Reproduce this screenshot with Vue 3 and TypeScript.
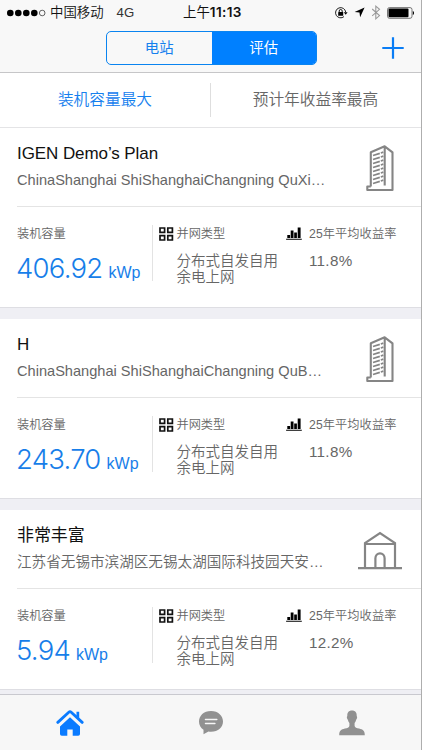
<script setup lang="ts">
import { ref } from 'vue'

interface Station {
  name: string
  address: string
  icon: 'tower' | 'house'
  capacity: string
  rate: string
}

const stations: Station[] = [
  { name: 'IGEN Demo’s Plan', address: 'ChinaShanghai ShiShanghaiChangning QuXi…', icon: 'tower', capacity: '406.92', rate: '11.8%' },
  { name: 'H', address: 'ChinaShanghai ShiShanghaiChangning QuB…', icon: 'tower', capacity: '243.70', rate: '11.8%' },
  { name: '非常丰富', address: '江苏省无锡市滨湖区无锡太湖国际科技园天安…', icon: 'house', capacity: '5.94', rate: '12.2%' },
]
const segments = ['电站', '评估']
const segment = ref(1)
const sorts = ['装机容量最大', '预计年收益率最高']
const sort = ref(0)
</script>

<template>
  <div class="screen">
    <header>
      <div class="status">
        <div class="carrier">
          <svg width="40" height="10" viewBox="0 0 40 10">
            <circle v-for="i in 4" :key="i" :cx="3.3 + (i - 1) * 8" cy="5" r="3.3" />
            <circle cx="35.2" cy="5" r="2.8" fill="none" stroke="#222" stroke-width=".7" />
          </svg>
          <span class="operator">中国移动</span>
          <span class="network">4G</span>
        </div>
        <div class="clock">上午<b>11:13</b></div>
        <div class="indicators">
          <svg width="14" height="14" viewBox="0 0 14 14">
            <path d="M11.7 6A5.1 5.1 0 1 0 10 10.6" fill="none" stroke="#222" stroke-width="1" />
            <path d="M9.8 6.3h3.8l-1.9 2.5z" />
            <rect x="4.2" y="6" width="5" height="3.8" rx=".4" />
            <path d="M5.2 6.2V5a1.5 1.5 0 0 1 3 0v1.2" fill="none" stroke="#000" stroke-width=".9" />
          </svg>
          <svg class="locate" width="11" height="11" viewBox="0 0 11 11"><path d="M10.6.4 6.1 10.2 5.5 5.6.6 5z" /></svg>
          <svg class="bluetooth" width="10" height="15" viewBox="0 0 10 15"><path d="m1.2 4 7.3 6.6-3.7 3.2V1.2l3.7 3.1-7.3 6.6" fill="none" stroke="#999" stroke-width="1.1" /></svg>
          <svg class="battery" width="28" height="12" viewBox="0 0 28 12">
            <rect x=".5" y=".6" width="24.5" height="10.7" rx="2" fill="none" stroke="#555" stroke-width=".8" />
            <rect x="1.5" y="1.6" width="20" height="8.7" rx="1" />
            <path d="M25.8 4c1.6.3 1.6 3.7 0 4z" />
          </svg>
        </div>
      </div>
      <div class="bar">
        <span></span>
        <div class="segmented">
          <button v-for="(label, i) in segments" :key="label" :class="{ on: segment === i }" @click="segment = i">{{ label }}</button>
        </div>
        <button class="add" aria-label="添加">
          <svg width="22" height="22" viewBox="0 0 22 22"><path d="M11 .3v21.4M.3 11h21.4" stroke="#0a7df5" stroke-width="2.2" /></svg>
        </button>
      </div>
    </header>

    <nav class="sorts">
      <button v-for="(label, i) in sorts" :key="label" :class="{ on: sort === i }" @click="sort = i">{{ label }}</button>
    </nav>

    <main>
      <article v-for="s in stations" :key="s.name">
        <div class="head">
          <div class="title">
            <h2>{{ s.name }}</h2>
            <p>{{ s.address }}</p>
          </div>
          <div class="icon">
            <svg v-if="s.icon === 'tower'" width="28" height="47" viewBox="0 0 28 47" fill="none" stroke="#858585">
              <path d="M4.8 41.5V7.2L18.7 1.3 26.500 7.400V45H1.300v-3.500h3.500M18.700 1.300v39.200" stroke-width="2.1" stroke-linejoin="round" />
              <path v-for="i in 8" :key="i" :d="`M7 ${6.5 + i * 4}l6.8-2.1M14.8 ${4 + i * 4}l2.5-.8`" stroke-width="1.8" />
            </svg>
            <svg v-else width="44" height="39" viewBox="0 0 44 39" fill="none" stroke="#858585" stroke-width="2.2">
              <path d="M0 37.2h44M7 37V12.2L22 2l15 10.2V37M7 13h30M17.4 37V27.3a4.6 5 0 0 1 9.2 0V37" />
            </svg>
          </div>
        </div>
        <div class="metrics">
          <section class="capacity">
            <h3>装机容量</h3>
            <div class="amount"><strong>{{ s.capacity }}</strong><span>kWp</span></div>
          </section>
          <section class="grid-type">
            <svg width="15" height="14" viewBox="0 0 15 14" fill="none" stroke="#111" stroke-width="1.7">
              <path d="M1 1h4.600v4.400H1zM8.800 1h4.600v4.400H8.800zM1 8.600h4.600V13H1zM8.800 8.600h4.600V13H8.800z" />
            </svg>
            <div>
              <h3>并网类型</h3>
              <p>分布式自发自用<br>余电上网</p>
            </div>
          </section>
          <section class="yield">
            <svg width="16" height="13" viewBox="0 0 16 13"><path d="M.1 11.700h15.700v1H.1zM1.300 8h2.800v3H1.300zM4.700 3.500h2.800V11H4.700zM8.200 5.500h2.700V11H8.200zM11.700.500h2.900V11h-2.900z" /></svg>
            <div>
              <h3>25年平均收益率</h3>
              <p>{{ s.rate }}</p>
            </div>
          </section>
        </div>
      </article>
    </main>

    <footer>
      <button aria-label="首页">
        <svg width="28" height="27" viewBox="0 0 28 27">
          <path d="M1.8 13.4 12.8 3.2q1.2-1.1 2.4 0l11 10.2" fill="none" stroke="#0a7bff" stroke-width="2.8" stroke-linecap="round" />
          <path d="M20.5 2.7h2.7v6.7l-2.7-2.5zM14 8.2 24 17.4V25q0 1.8-1.800 1.800h-5.500v-6.400h-5.400v6.400H5.800Q4 26.800 4 25v-7.600z" fill="#0a7bff" />
        </svg>
      </button>
      <button aria-label="消息">
        <svg width="26" height="25" viewBox="0 0 26 25">
          <path d="M13 1C5.7 1 1 5.7 1 11.5c0 3.5 1.7 6.3 4.5 8.3v4.5l5-2.8q1.2.2 2.5.2c7.3 0 12-4.7 12-10.200S20.300 1 13 1z" fill="#919191" />
          <path d="M7.5 9.6h11.3M7.5 13.6h9.4" stroke="#f7f7f7" stroke-width="1.5" stroke-linecap="round" />
        </svg>
      </button>
      <button aria-label="我的">
        <svg width="26" height="26" viewBox="0 0 26 26">
          <path d="M13 .5c3.4 0 4.8 2.2 4.7 5.2 0 .7.6.8.4 2-.2 1.3-.8 1.5-1 2.3-.3 1.3-.9 2.3-1.5 3.1v2.8c.4 1.600 2 1.900 4.500 2.700 3.700 1.100 5.700 2 5.700 6.600H.2c0-4.600 2-5.500 5.700-6.600 2.500-.8 4.100-1.100 4.500-2.700v-2.800c-.6-.8-1.200-1.800-1.500-3.100-.2-.8-.8-1-1-2.300-.2-1.200.4-1.300.4-2C8.200 2.700 9.600.5 13 .5z" fill="#919191" />
        </svg>
      </button>
    </footer>
  </div>
</template>

<style>
body { margin: 0; }
</style>

<style scoped>
* { box-sizing: border-box; margin: 0; }
.screen {
  width: 422px;
  height: 750px;
  display: flex;
  flex-direction: column;
  overflow: hidden;
  background: #efeff4;
  border-right: 1px solid #aeaeae;
  font-family: "Liberation Sans", "Noto Sans CJK SC", sans-serif;
  color: #666;
}
button { border: 0; padding: 0; background: none; font: inherit; color: inherit; }
svg { display: block; flex: none; }
header { height: 73px; flex: none; background: #f8f8f8; border-bottom: 1px solid #c6c6c8; }
.status { height: 24px; display: grid; grid-template-columns: 176px auto 1fr; align-items: center; padding: 0 7px; color: #111; }
.carrier { display: flex; align-items: center; font-size: 13.4px; line-height: 24px; }
.operator { margin-left: 3px; font-weight: 350; }
.network { margin-left: 13px; font-size: 13.2px; color: #333; }
.clock { font-size: 13.4px; line-height: 24px; }
.clock b { font: 600 13.600px/24px Inter, sans-serif; letter-spacing: .35px; }
.indicators { display: flex; align-items: center; justify-content: flex-end; margin-right: -1px; }
.locate { margin-left: 6px; }
.bluetooth { margin-left: 6px; }
.battery { margin-left: 6px; }
.bar { height: 48px; display: grid; grid-template-columns: 88px 211px 1fr; padding: 7px 17px 0 18px; align-items: start; }
.segmented { display: flex; height: 34px; border: 1px solid #0a84f0; border-radius: 5px; overflow: hidden; }
.segmented button { flex: 1; color: #1580ee; font-size: 14.4px; line-height: 31px; }
.segmented .on { background: #0080ff; color: #fff; }
.add { justify-self: end; margin-top: 6px; }
.sorts { display: grid; grid-template-columns: 210px 1fr; height: 55px; flex: none; background: #fff; border-bottom: 1px solid #e4e4e6; }
.sorts button { font-size: 15.7px; font-weight: 350; line-height: 54px; position: relative; }
.sorts .on { color: #1580ee; }
.sorts button + button::before { content: ""; position: absolute; left: 0; top: 10px; width: 1px; height: 34px; background: #dedede; }
main { flex: 1; min-height: 0; display: flex; flex-direction: column; gap: 11px; }
article { height: 180px; flex: none; background: #fff; border-bottom: 1px solid #dedee3; }
.head { height: 79px; margin-left: 17px; display: flex; justify-content: space-between; border-bottom: 1px solid #e4e4e4; }
.title { padding-top: 15px; }
h2 { font-size: 17px; line-height: 22px; font-weight: 400; color: #111; letter-spacing: -.08px; }
.title p { font-size: 14.6px; line-height: 22px; margin-top: 4px; white-space: nowrap; font-weight: 350; }
.icon { width: 44px; margin-right: 19px; padding-top: 3px; display: flex; align-items: center; justify-content: center; }
.metrics { height: 100px; display: grid; grid-template-columns: 153px 133px 1fr; padding-top: 18px; }
h3 { font-size: 12.2px; line-height: 18px; font-weight: 350; }
.capacity { padding-left: 17px; height: 56px; border-right: 1px solid #e3e3e3; }
.amount { display: flex; align-items: baseline; margin-top: 9px; color: #177ee9; }
.amount strong { font: 300 27.5px/32px Inter, sans-serif; letter-spacing: -.75px; margin-left: -1px; }
.amount span { font-size: 16px; line-height: 32px; margin-left: 6px; }
.grid-type, .yield { display: flex; gap: 3px; }
.grid-type { padding-left: 6px; }
.grid-type svg { margin-top: 2px; }
.grid-type p { font-size: 14.5px; line-height: 16.4px; margin-top: 10px; white-space: nowrap; font-weight: 350; }
.grid-type div { margin-left: -.5px; }
.yield { gap: 7px; }
.yield svg { margin-top: 2px; }
.yield h3 { letter-spacing: .1px; }
.yield p { font-size: 15.2px; line-height: 18px; margin-top: 9px; letter-spacing: .3px; }
footer { height: 56px; flex: none; display: grid; grid-template-columns: repeat(3, 1fr); margin-right: -1px; background: #f7f7f7; border-top: 1px solid #c9c9cf; }
footer button { display: flex; justify-content: center; align-items: center; }
</style>
